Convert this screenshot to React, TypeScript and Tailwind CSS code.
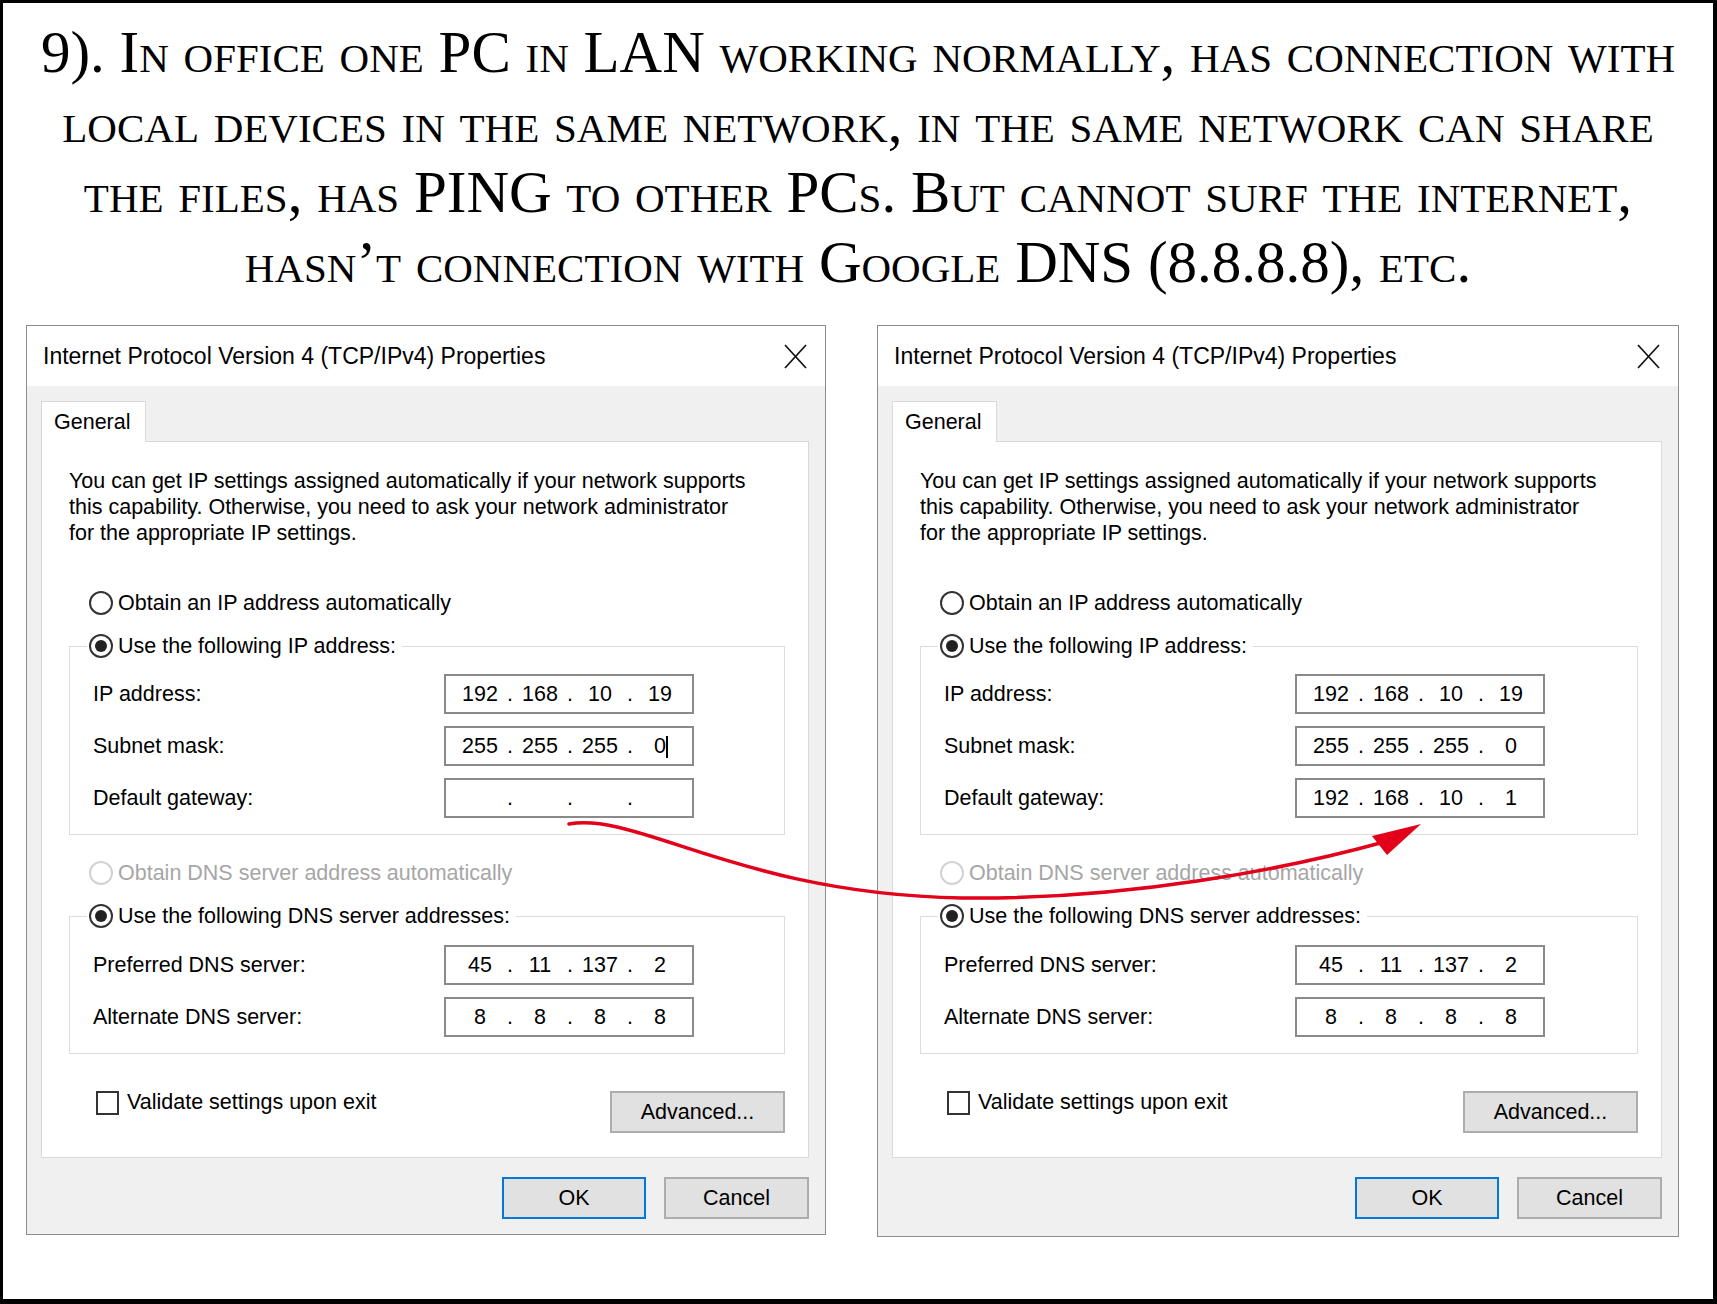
import { Fragment } from "react";

function Radio({ checked, disabled }: { checked?: boolean; disabled?: boolean }) {
  return (
    <span
      className={
        disabled
          ? "flex h-[24px] w-[24px] shrink-0 items-center justify-center rounded-full border-2 border-[#d2d2d2] bg-white"
          : "flex h-[24px] w-[24px] shrink-0 items-center justify-center rounded-full border-2 border-[#333] bg-white"
      }
    >
      {checked && <span className="h-[12px] w-[12px] rounded-full bg-[#222]" />}
    </span>
  );
}

function IpField({ parts, caret }: { parts: string[]; caret?: boolean }) {
  return (
    <div className="flex h-[40px] w-[250px] items-center border-2 border-[#8a8a8a] bg-white pl-[8px]">
      {parts.map((p, i) => (
        <Fragment key={i}>
          {i > 0 && <span className="w-[8px] text-center">.</span>}
          <span className="w-[52px] text-center">
            {p}
            {caret && i === 3 && <span className="-mr-[2px] inline-block h-[22px] w-[2px] bg-black align-middle" />}
          </span>
        </Fragment>
      ))}
    </div>
  );
}

function Row({ label, children }: { label: string; children: React.ReactNode }) {
  return (
    <div className="flex items-center">
      <span className="w-[351px]">{label}</span>
      {children}
    </div>
  );
}

function Dialog({ gateway, caret, wide }: { gateway: string[]; caret?: boolean; wide?: boolean }) {
  return (
    <div
      className={
        wide
          ? "flex h-[912px] w-[802px] flex-col border border-[#8c8c8c] bg-[#f0f0f0] text-[21.5px] text-black"
          : "flex h-[910px] w-[800px] flex-col border border-[#8c8c8c] bg-[#f0f0f0] text-[21.5px] text-black"
      }
    >
      <div className="flex h-[60px] items-center justify-between bg-white pl-[16px] pr-[18px] text-[23px]">
        <span>Internet Protocol Version 4 (TCP/IPv4) Properties</span>
        <svg width="23" height="25" viewBox="0 0 23 25" fill="none" stroke="#111" strokeWidth="1.7">
          <path d="M1 1 L22 24 M22 1 L1 24" />
        </svg>
      </div>

      <div className="flex flex-col pl-[14px] pr-[16px] pt-[15px]">
        <div className="flex">
          <div className="relative z-10 -mb-px flex h-[41px] w-[105px] items-center border border-b-0 border-[#d9d9d9] bg-white pl-[12px]">
            General
          </div>
        </div>

        <div className="flex h-[717px] flex-col border border-[#d9d9d9] bg-white pl-[27px] pr-[23px]">
          <p className="mt-[26px] leading-[26px]">
            You can get IP settings assigned automatically if your network supports
            <br />
            this capability. Otherwise, you need to ask your network administrator
            <br />
            for the appropriate IP settings.
          </p>

          <div className="ml-[20px] mt-[42px] flex h-[30px] items-center gap-[5px]">
            <Radio />
            <span>Obtain an IP address automatically</span>
          </div>

          <fieldset className="mt-[14px] border border-[#dcdcdc] pb-[16px] pt-[14px]">
            <legend className="ml-[17px] pl-[2px] pr-[6px]">
              <span className="flex h-[28px] items-center gap-[5px]">
                <Radio checked />
                <span>Use the following IP address:</span>
              </span>
            </legend>
            <div className="flex flex-col gap-[12px] pl-[23px]">
              <Row label="IP address:">
                <IpField parts={["192", "168", "10", "19"]} />
              </Row>
              <Row label="Subnet mask:">
                <IpField parts={["255", "255", "255", "0"]} caret={caret} />
              </Row>
              <Row label="Default gateway:">
                <IpField parts={gateway} />
              </Row>
            </div>
          </fieldset>

          <div className="ml-[20px] mt-[23px] flex h-[30px] items-center gap-[5px] text-[#a6a6a6]">
            <Radio disabled />
            <span>Obtain DNS server address automatically</span>
          </div>

          <fieldset className="mt-[14px] border border-[#dcdcdc] pb-[16px] pt-[15px]">
            <legend className="ml-[17px] pl-[2px] pr-[6px]">
              <span className="flex h-[28px] items-center gap-[5px]">
                <Radio checked />
                <span>Use the following DNS server addresses:</span>
              </span>
            </legend>
            <div className="flex flex-col gap-[12px] pl-[23px]">
              <Row label="Preferred DNS server:">
                <IpField parts={["45", "11", "137", "2"]} />
              </Row>
              <Row label="Alternate DNS server:">
                <IpField parts={["8", "8", "8", "8"]} />
              </Row>
            </div>
          </fieldset>

          <div className="mt-[36px] flex items-start justify-between">
            <div className="ml-[27px] flex h-[25px] items-center gap-[8px]">
              <span className="h-[24px] w-[23px] border-2 border-[#333] bg-white" />
              <span>Validate settings upon exit</span>
            </div>
            <div className="mt-[1px] flex h-[42px] w-[175px] items-center justify-center border-2 border-[#adadad] bg-[#e1e1e1]">
              Advanced...
            </div>
          </div>
        </div>

        <div className="mt-[19px] flex justify-end gap-[18px]">
          <div className="flex h-[42px] w-[144px] items-center justify-center border-2 border-[#0078d7] bg-[#e1e1e1]">
            OK
          </div>
          <div className="flex h-[42px] w-[145px] items-center justify-center border-2 border-[#adadad] bg-[#e1e1e1]">
            Cancel
          </div>
        </div>
      </div>
    </div>
  );
}

export default function App() {
  return (
    <div className="relative h-[1304px] w-[1717px] border-b-[5px] border-l-[3px] border-r-[4px] border-t-[3px] border-black bg-white font-['Liberation_Sans',Arial,sans-serif]">
      <div className="flex flex-col items-center pt-[14px] font-['Liberation_Serif','Times_New_Roman',serif] text-[59px] leading-[70px] text-black [font-variant-caps:small-caps]">
        <div className="whitespace-nowrap">9). In office one PC in LAN working normally, has connection with</div>
        <div className="whitespace-nowrap">local devices in the same network, in the same network can share</div>
        <div className="whitespace-nowrap">the files, has PING to other PCs. But cannot surf the internet,</div>
        <div className="whitespace-nowrap">hasn’t connection with Google DNS (8.8.8.8), etc.</div>
      </div>

      <div className="mt-[28px] flex items-start gap-[51px] pl-[23px]">
        <Dialog gateway={["", "", "", ""]} caret />
        <Dialog gateway={["192", "168", "10", "1"]} wide />
      </div>

      <svg
        className="pointer-events-none absolute left-[-3px] top-[-3px]"
        width="1717"
        height="1304"
        viewBox="0 0 1717 1304"
        fill="none"
      >
        <path
          d="M569 824 C640 812 740 894 962 898 C1130 900 1290 868 1384 842"
          stroke="#e2001a"
          strokeWidth="3.5"
          strokeLinecap="round"
        />
        <path d="M1421 824 L1372 836 L1387 855 Z" fill="#e2001a" />
      </svg>
    </div>
  );
}
